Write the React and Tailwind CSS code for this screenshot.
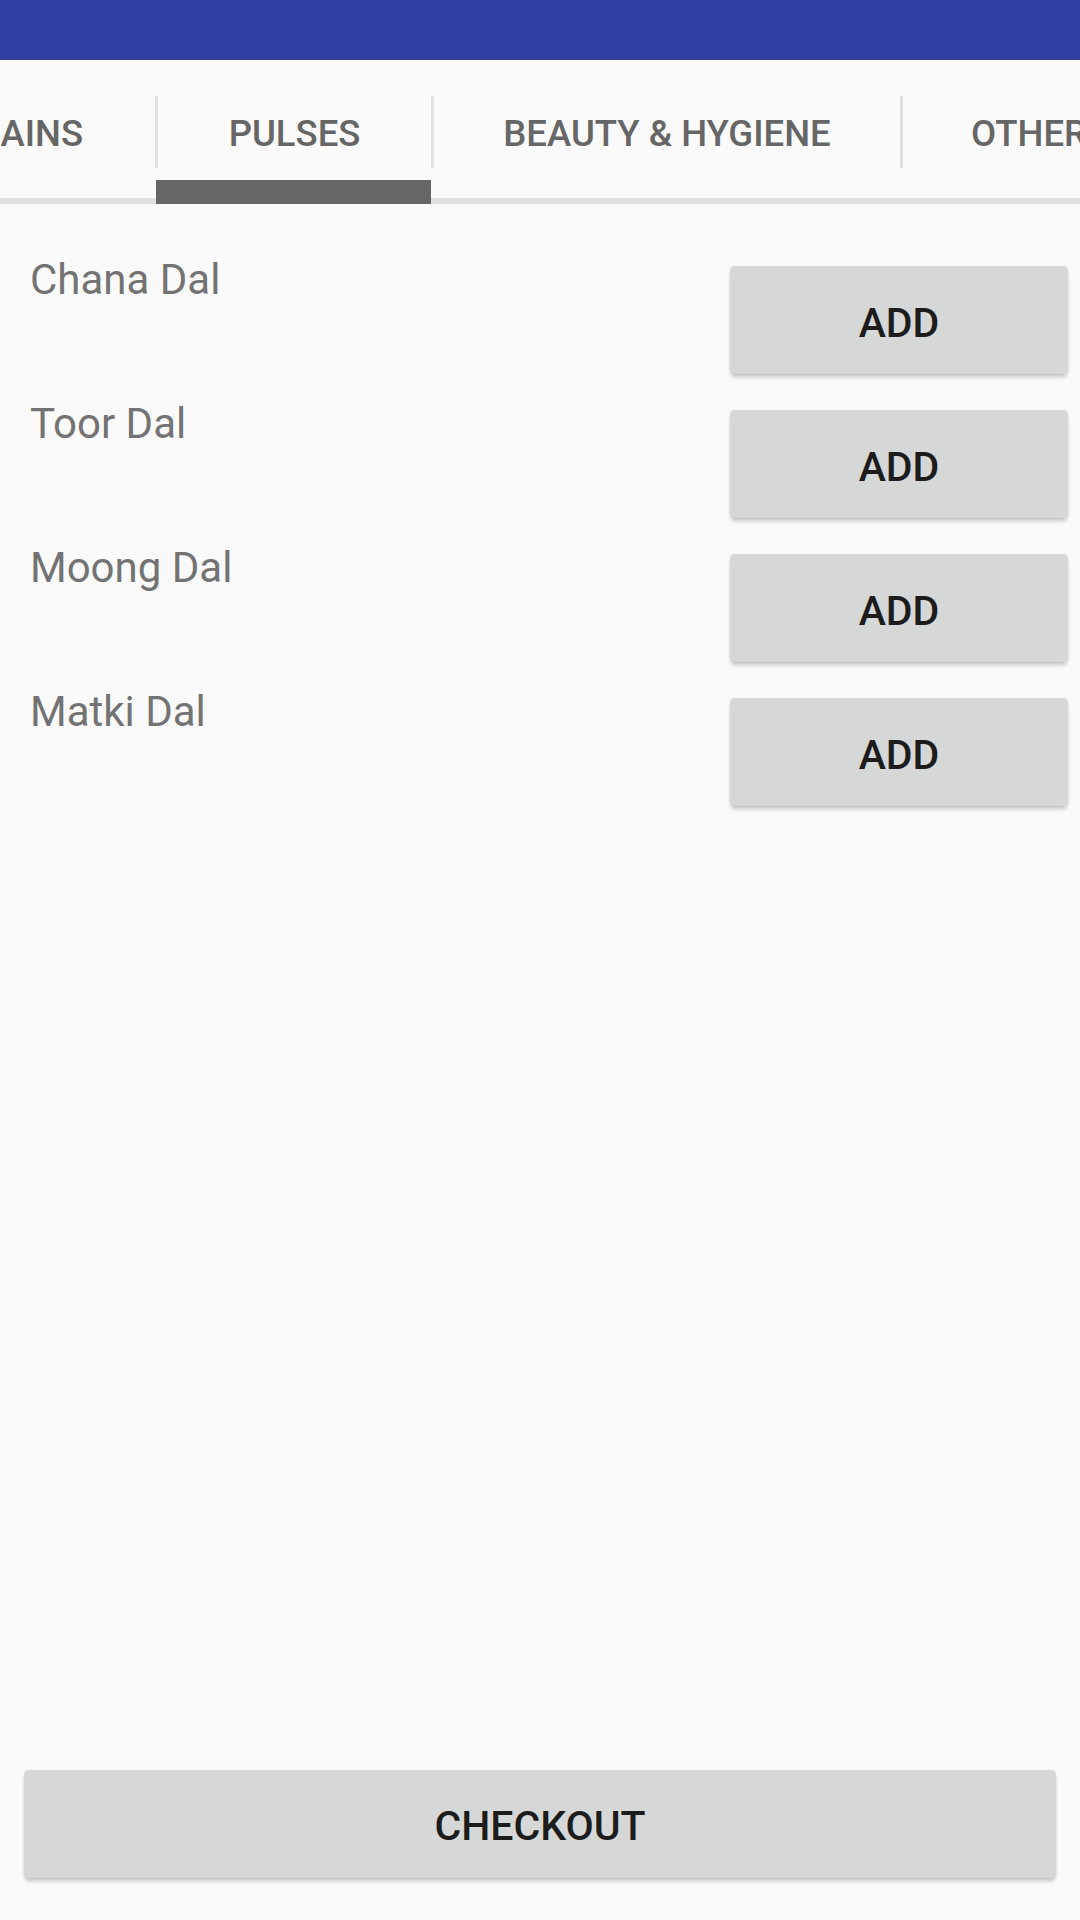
import React from 'react';

const ITEMS = ['Chana Dal', 'Toor Dal', 'Moong Dal', 'Matki Dal'];

function Divider() {
  return <div className="w-[3px] h-[72px] shrink-0 self-center bg-[#e2e2e2]" />;
}

function Tabs() {
  return (
    <div className="relative h-[144px] overflow-hidden">
      {/* bottom rule of the tab strip */}
      <div className="absolute inset-x-0 bottom-0 h-[6px] bg-[#e0e0e0]" />
      <div className="flex h-full text-[36.5px] font-medium text-[#666666]">
        {/* scrolled off to the left, text hangs out of the start side */}
        <div className="w-[155px] shrink-0 flex items-center justify-end pr-[72px] pt-[5px] whitespace-nowrap">GRAINS</div>
        <Divider />
        <div className="relative w-[273px] shrink-0 flex items-center justify-center pt-[5px] whitespace-nowrap">
          PULSES
          <div className="absolute bottom-0 -left-[2px] right-0 h-[24px] bg-[#666666]" />
        </div>
        <Divider />
        <div className="w-[466px] shrink-0 flex items-center justify-center pt-[5px] whitespace-nowrap">BEAUTY &amp; HYGIENE</div>
        <Divider />
        <div className="shrink-0 flex items-center pl-[68px] pr-[72px] pt-[5px] whitespace-nowrap">OTHERS</div>
      </div>
    </div>
  );
}

function Row({ name }) {
  return (
    <div className="flex justify-between items-start h-[144px] pl-[30px] pr-[12px]">
      <div className="text-[42px] leading-[42px] text-[#737373]">{name}</div>
      <button className="mt-[7px] w-[338px] h-[108px] pt-[7px] rounded-[5px] bg-[#d6d7d7] text-[41px] font-medium text-[#1c1c1c] shadow-[0_4px_4px_-1px_rgba(0,0,0,0.22),0_0_2px_rgba(0,0,0,0.08)]">
        ADD
      </button>
    </div>
  );
}

export default function App() {
  return (
    <div className="h-screen flex flex-col bg-[#fafafa] font-['Roboto',sans-serif]">
      <div className="h-[60px] shrink-0 bg-[#303f9f]" />
      <Tabs />
      <div className="pt-[55px]">
        {ITEMS.map((n) => (
          <Row key={n} name={n} />
        ))}
      </div>
      <button className="mt-auto mx-[24px] mb-[42px] h-[108px] pt-[5px] rounded-[5px] bg-[#d6d7d7] text-[41px] font-medium text-[#1c1c1c] shadow-[0_4px_4px_-1px_rgba(0,0,0,0.22),0_0_2px_rgba(0,0,0,0.08)]">
        CHECKOUT
      </button>
    </div>
  );
}
